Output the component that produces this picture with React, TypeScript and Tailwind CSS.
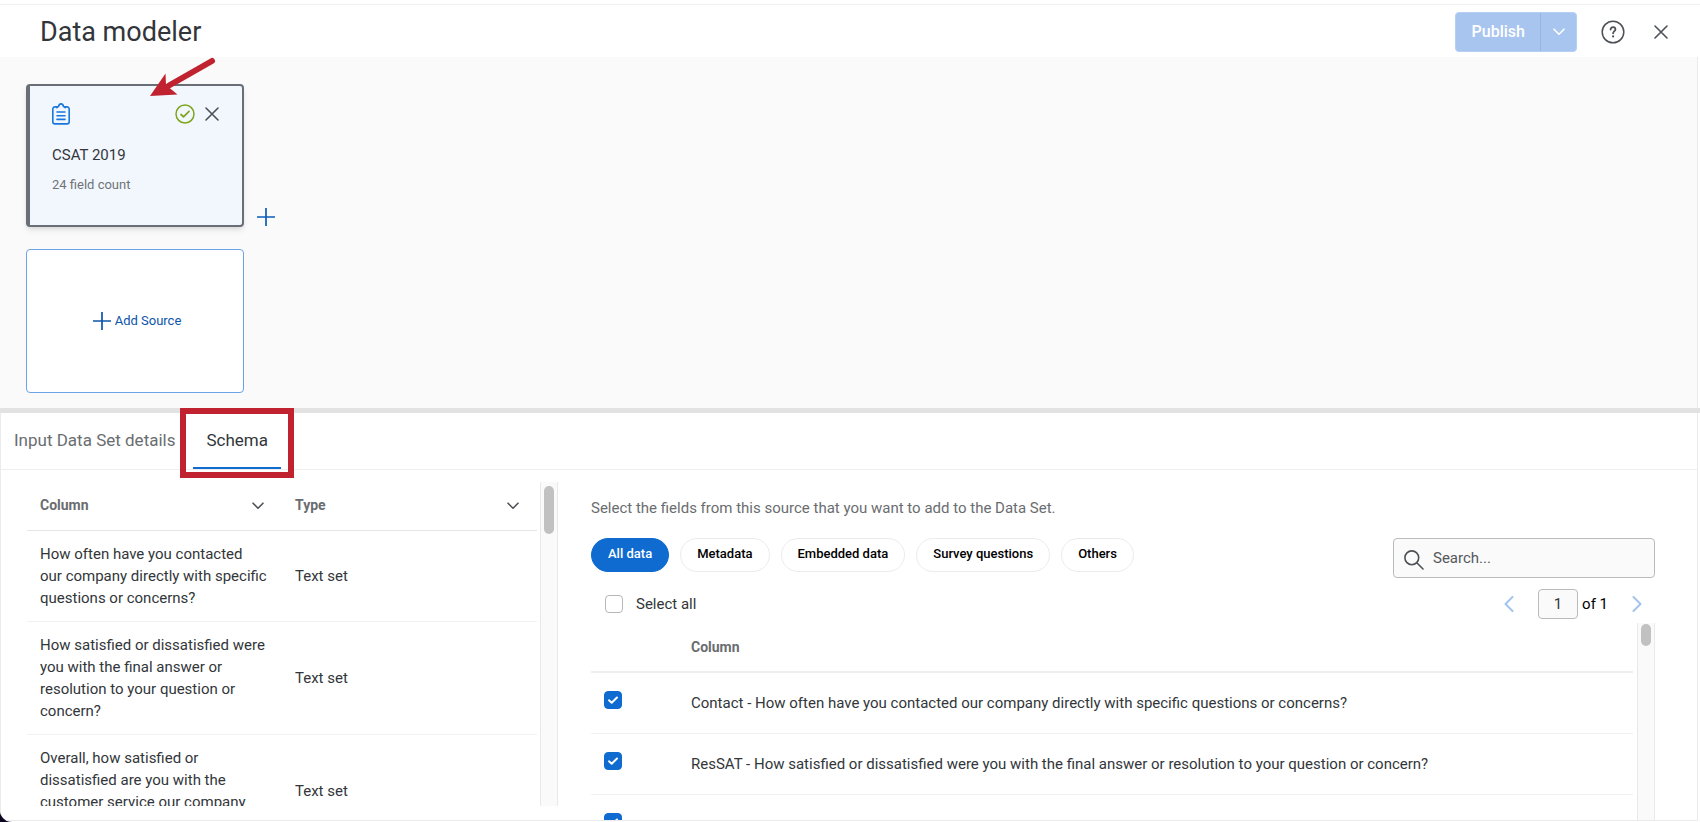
import { useState } from 'react';
import { clsx } from 'clsx';

interface SchemaRow {
  column: string;
  type: string;
}

const SCHEMA_ROWS: SchemaRow[] = [
  { column: 'How often have you contacted our company directly with specific questions or concerns?', type: 'Text set' },
  { column: 'How satisfied or dissatisfied were you with the final answer or resolution to your question or concern?', type: 'Text set' },
  { column: 'Overall, how satisfied or dissatisfied are you with the customer service our company provides?', type: 'Text set' },
];

const FIELDS = [
  'Contact - How often have you contacted our company directly with specific questions or concerns?',
  'ResSAT - How satisfied or dissatisfied were you with the final answer or resolution to your question or concern?',
  '',
];

const FILTERS = ['All data', 'Metadata', 'Embedded data', 'Survey questions', 'Others'];

function Chevron({ className }: { className?: string }) {
  return (
    <svg viewBox="0 0 12 8" className={className} fill="none" stroke="currentColor" strokeWidth="1.6" strokeLinecap="round" strokeLinejoin="round">
      <path d="M1 1.2l5 5 5-5" />
    </svg>
  );
}

function Cross({ className }: { className?: string }) {
  return (
    <svg viewBox="0 0 14 14" className={className} fill="none" stroke="currentColor" strokeWidth="1.6" strokeLinecap="round">
      <path d="M1 1l12 12M13 1L1 13" />
    </svg>
  );
}

function Plus({ className }: { className?: string }) {
  return (
    <svg viewBox="0 0 18 18" className={className} fill="none" stroke="currentColor" strokeWidth="1.7">
      <path d="M9 0v18M0 9h18" />
    </svg>
  );
}

function Header() {
  return (
    <header className="flex h-[52px] shrink-0 items-center justify-between pt-0.5 pr-8 pl-10">
      <h1 className="text-[27px] leading-8 text-[#32363a]">Data modeler</h1>
      <div className="flex items-center">
        <div className="flex h-10 rounded border border-[#b4cff3] bg-[#a8c5ef] text-white">
          <button className="pr-[15px] pl-4 text-base font-medium">Publish</button>
          <button aria-label="More publish options" className="flex w-9 items-center justify-center border-l border-[#8fb7ec]">
            <Chevron className="h-2 w-3" />
          </button>
        </div>
        <button aria-label="Help" className="ml-6 text-[#4d5156]">
          <svg viewBox="0 0 24 24" className="size-6" fill="none" stroke="currentColor" strokeWidth="1.5" strokeLinecap="round">
            <circle cx="12" cy="12" r="10.8" />
            <path d="M9.6 9.6c0-1.5 1-2.4 2.4-2.4s2.4.9 2.4 2.2c0 1.7-2.3 1.8-2.3 3.9" strokeWidth="1.8" />
            <path d="M12.1 16.4v.1" strokeWidth="2.2" />
          </svg>
        </button>
        <button aria-label="Close" className="ml-[29px] text-[#4d5156]">
          <Cross className="size-3.5" />
        </button>
      </div>
    </header>
  );
}

function SourceCard() {
  return (
    <div className="relative h-[143px] w-[218px] rounded border-2 border-l-4 border-[#6a6f77] bg-[#f2f7fe] pt-[17px] pr-[23px] pl-[22px] shadow-md">
      <div className="flex items-center justify-between">
        <svg viewBox="0 0 18 22" className="h-[22px] w-[18px] text-[#1976dc]" fill="none" stroke="currentColor" strokeWidth="1.6" strokeLinecap="round" strokeLinejoin="round">
          <path d="M5.5 3.9H3A2.2 2.2 0 0 0 .8 6.1v12.6A2.2 2.2 0 0 0 3 20.9h12a2.2 2.2 0 0 0 2.2-2.2V6.1A2.2 2.2 0 0 0 15 3.9h-2.500" />
          <path d="M4.8 4.800c0-.9.9-1.100 1.700-1.300C6.900 1.800 7.700.9 9 .9s2.100.9 2.500 2.600c.8.2 1.700.4 1.700 1.300" />
          <path d="M5 9h8M5 12.700h8M5 16.400h8" />
        </svg>
        <div className="flex items-center gap-2.5">
          <svg viewBox="0 0 20 20" className="size-5 text-[#7ea51c]" fill="none" stroke="currentColor" strokeWidth="1.5" strokeLinecap="round" strokeLinejoin="round">
            <circle cx="10" cy="10" r="9" />
            <path d="M6 10.500l2.500 2.300L14 7.300" strokeWidth="1.7" />
          </svg>
          <button aria-label="Remove source" className="text-[#4d5156]">
            <Cross className="size-3.5" />
          </button>
        </div>
      </div>
      <p className="mt-5 text-[15px] leading-5 text-[#32363a]">CSAT 2019</p>
      <p className="mt-2.5 text-[13px] leading-5 text-[#6f7378]">24 field count</p>
      {/* pointer to the selected source */}
      <svg viewBox="0 0 66 40" className="absolute -top-[29px] left-[120px] h-10 w-[66px]">
        <path d="M62 4L19 28.500" stroke="#c1222f" strokeWidth="6" strokeLinecap="round" />
        <path d="M0 39L15.500 16.500 16 28 27.500 37.500z" fill="#c1222f" />
      </svg>
    </div>
  );
}

function Canvas() {
  return (
    <section className="mr-0.5 h-[351px] shrink-0 border-r border-[#ebebeb] bg-[#fafafa] pt-[27px] pl-[26px]">
      <div className="flex items-end gap-[13px]">
        <SourceCard />
        <button aria-label="Add step" className="pb-px text-[#0b5cb8]">
          <Plus className="size-[18px]" />
        </button>
      </div>
      <button className="mt-[22px] flex h-36 w-[218px] items-center justify-center gap-1 rounded border border-[#6aa3e6] bg-white pl-1 text-[13px] text-[#0b55ab]">
        <Plus className="size-[18px]" />
        Add Source
      </button>
    </section>
  );
}

function Tabs() {
  return (
    <nav role="tablist" className="flex h-[57px] shrink-0 items-stretch border-b border-[#efefef] pl-[13px] text-[17px]">
      <button role="tab" aria-selected="false" className="text-[#6a6d70]">Input Data Set details</button>
      <button role="tab" aria-selected="true" className="relative ml-[18px] px-[13px] text-[#32363a]">
        Schema
        <span className="absolute inset-x-0 bottom-0 h-0.5 bg-[#0f6bd0]" />
        <span className="pointer-events-none absolute -inset-x-[13px] -top-[5px] -bottom-[9px] border-6 border-[#c1222f]" />
      </button>
    </nav>
  );
}

function ScrollTrack({ small }: { small?: boolean }) {
  return (
    <div className={clsx('w-[18px] shrink-0 border-x border-[#e9e9e9] bg-[#fafafa]', small ? 'pt-px' : 'pt-1')}>
      <div className={clsx('mx-auto w-2.5 rounded-full bg-[#c1c1c1]', small ? 'h-[22px]' : 'h-12')} />
    </div>
  );
}

function SchemaTable() {
  return (
    <div className="mt-3 mb-3.5 ml-[26px] flex w-[531px] shrink-0 gap-[3px] overflow-hidden">
      <div className="flex-1 overflow-hidden">
        <table className="w-full table-fixed text-left text-[#32363a]">
          <thead>
            <tr className="h-12 border-b border-[#e4e4e4] text-[14px] text-[#6a6d70]">
              {['Column', 'Type'].map(name => (
                <th key={name} className="px-[13px] font-bold">
                  <div className="flex items-center justify-between pr-[5px]">
                    {name}
                    <button aria-label={`Sort by ${name}`} className="text-[#4d5156]"><Chevron className="h-2 w-3" /></button>
                  </div>
                </th>
              ))}
            </tr>
          </thead>
          <tbody>
            {SCHEMA_ROWS.map(row => (
              <tr key={row.column} className="border-b border-[#f2f2f2] text-[15px] leading-[22px]">
                <td className="py-3 pr-[14px] pl-[13px]">{row.column}</td>
                <td className="px-[13px]">{row.type}</td>
              </tr>
            ))}
          </tbody>
        </table>
      </div>
      <ScrollTrack />
    </div>
  );
}

function Tick({ checked, onChange, label, id }: { checked: boolean; onChange: () => void; label?: string; id?: string }) {
  return (
    <span className="relative block size-[18px]">
      <input id={id} type="checkbox" aria-label={label} checked={checked} onChange={onChange} className="peer block size-[18px] appearance-none rounded border border-[#b5b7b9] bg-white checked:border-[#0f6bd0] checked:bg-[#0f6bd0]" />
      <svg viewBox="0 0 18 18" className="pointer-events-none absolute inset-0 hidden size-[18px] text-white peer-checked:block" fill="none" stroke="currentColor" strokeWidth="2" strokeLinecap="round" strokeLinejoin="round">
        <path d="M5 9.300l2.700 2.400L13 6.500" />
      </svg>
    </span>
  );
}

function FieldPicker() {
  const [filter, setFilter] = useState('All data');
  const [all, setAll] = useState(false);
  const [picked, setPicked] = useState(FIELDS.map(() => true));

  const toggle = (index: number) => setPicked(picked.map((on, i) => (i === index ? !on : on)));

  return (
    <div className="ml-[33px] flex min-w-0 flex-1 flex-col overflow-hidden pt-[26px] pr-[42px]">
      <p className="text-[15px] leading-6 text-[#6a6d70]">Select the fields from this source that you want to add to the Data Set.</p>
      <div className="mt-[18px] flex items-start justify-between">
        <div className="flex gap-[11px]">
          {FILTERS.map(name => (
            <button
              key={name}
              onClick={() => setFilter(name)}
              className={clsx('h-[34px] rounded-full border px-4 pb-0.5 text-[13px] font-medium', filter === name ? 'border-[#0f6bd0] bg-[#0f6bd0] text-white' : 'border-[#ececec] bg-white text-black')}
            >
              {name}
            </button>
          ))}
        </div>
        <label className="flex h-10 w-[262px] items-center gap-[9px] rounded border border-[#b9bbbd] bg-[#fafafa] px-2.5">
          <svg viewBox="0 0 20 20" className="mt-1 size-5 shrink-0 text-[#4d5156]" fill="none" stroke="currentColor" strokeWidth="1.6" strokeLinecap="round">
            <circle cx="7.8" cy="7.8" r="6.9" />
            <path d="M12.8 12.800l6.200 6.200" />
          </svg>
          <input type="text" aria-label="Search" placeholder="Search..." className="w-full bg-transparent text-[15px] text-[#32363a] outline-none placeholder:text-[#54585c]" />
        </label>
      </div>
      <div className="mt-[11px] flex items-center justify-between pr-[13px] pl-3.5">
        <label htmlFor="select-all" className="flex items-center gap-[13px] text-[15px] text-[#32363a]">
          <Tick id="select-all" checked={all} onChange={() => setAll(!all)} />
          Select all
        </label>
        <div className="flex items-center text-[15px] text-black">
          <button aria-label="Previous page" className="text-[#a3c3ef]">
            <svg viewBox="0 0 10 16" className="h-4 w-2.5" fill="none" stroke="currentColor" strokeWidth="2" strokeLinecap="round" strokeLinejoin="round"><path d="M8.500 1L1.500 8l7 7" /></svg>
          </button>
          <input type="text" aria-label="Page" defaultValue="1" className="ml-6 h-[30px] w-10 rounded border border-[#b9bbbd] bg-[#fafafa] text-center text-[#32363a]" />
          <span className="ml-1">of 1</span>
          <button aria-label="Next page" className="ml-6 text-[#a3c3ef]">
            <svg viewBox="0 0 10 16" className="h-4 w-2.5" fill="none" stroke="currentColor" strokeWidth="2" strokeLinecap="round" strokeLinejoin="round"><path d="M1.500 1l7 7-7 7" /></svg>
          </button>
        </div>
      </div>
      <div className="mt-1 flex min-h-0 flex-1 gap-1 overflow-hidden">
        <div className="flex-1 overflow-hidden">
          <table className="w-full text-left text-[#32363a]">
            <thead>
              <tr className="h-[49px] border-b-2 border-[#efefef] text-[14px] text-[#6a6d70]">
                <td className="w-[100px]" />
                <th className="font-bold">Column</th>
              </tr>
            </thead>
            <tbody>
              {FIELDS.map((field, i) => (
                <tr key={field} className="h-[61px] border-b border-[#f0f0f0] text-[15px]">
                  <td className="pb-1.5 pl-[13px]"><Tick checked={picked[i]} onChange={() => toggle(i)} label={field || 'Next field'} /></td>
                  <td className="pt-px">{field}</td>
                </tr>
              ))}
            </tbody>
          </table>
        </div>
        <ScrollTrack small />
      </div>
    </div>
  );
}

export default function App() {
  return (
    <div className="h-screen bg-[#0d0620] font-['Roboto','Liberation_Sans',sans-serif]">
      <div className="flex h-full flex-col overflow-hidden rounded-bl-xl bg-white pt-1">
        <div className="flex min-h-0 flex-1 flex-col border-t border-[#f1f1f1]">
          <Header />
          <Canvas />
          <div className="h-[5px] shrink-0 bg-[#e2e2e2]" />
          <section className="mr-0.5 mb-px flex min-h-0 flex-1 flex-col border border-t-0 border-[#ebebeb]">
            <Tabs />
            <div className="flex min-h-0 flex-1">
              <SchemaTable />
              <FieldPicker />
            </div>
          </section>
        </div>
      </div>
    </div>
  );
}
